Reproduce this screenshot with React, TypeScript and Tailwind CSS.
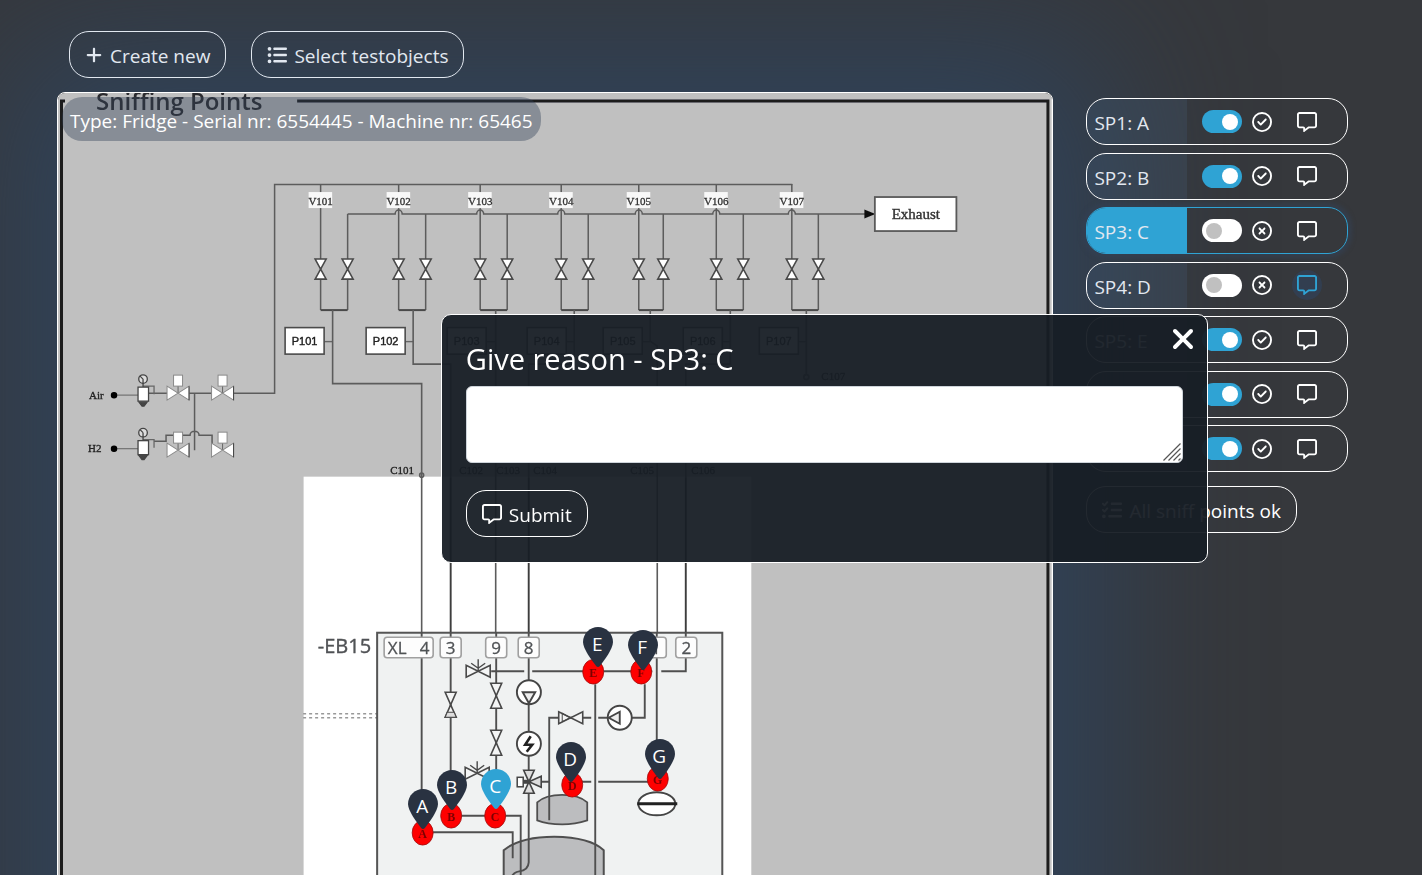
import { useState } from "react";
import {
  FaListCheck,
  FaListUl,
  FaLocationPin,
  FaPlus,
  FaRegCircleCheck,
  FaRegCircleXmark,
  FaRegMessage,
  FaXmark,
} from "react-icons/fa6";

type Point = { id: string; label: string; ok: boolean; hasComment?: boolean };

const initialPoints: Point[] = [
  { id: "SP1", label: "A", ok: true },
  { id: "SP2", label: "B", ok: true },
  { id: "SP3", label: "C", ok: false },
  { id: "SP4", label: "D", ok: false, hasComment: true },
  { id: "SP5", label: "E", ok: true },
  { id: "SP6", label: "F", ok: true },
  { id: "SP7", label: "G", ok: true },
];

// Drawing area shared by the diagram and the pins laid over it.
const VIEW = { x: 58, y: 93, w: 994, h: 907 };

const pins = [
  { label: "E", x: 598, y: 627 },
  { label: "F", x: 643, y: 630 },
  { label: "G", x: 660, y: 739 },
  { label: "D", x: 571, y: 742 },
  { label: "C", x: 496, y: 769 },
  { label: "B", x: 452, y: 770 },
  { label: "A", x: 423, y: 789 },
];

const branches = [
  { n: 1, a: 320.5, b: 347.5, p: 285, drop: 332.5 },
  { n: 2, a: 398.5, b: 425.5, p: 366, drop: 413 },
  { n: 3, a: 480, b: 507, p: 447, drop: 495 },
  { n: 4, a: 561, b: 588, p: 527, drop: 574 },
  { n: 5, a: 638.5, b: 663, p: 603, drop: 650 },
  { n: 6, a: 716, b: 743, p: 683, drop: 730 },
  { n: 7, a: 791.5, b: 818, p: 759, drop: 806 },
];

function ValveV({ x, y, h = 20, fill = "#fff" }: { x: number; y: number; h?: number; fill?: string }) {
  const t = y - h / 2;
  const b = y + h / 2;
  return (
    <path
      d={`M${x - 5.5} ${t}H${x + 5.5}L${x - 5.5} ${b}H${x + 5.5}Z`}
      fill={fill}
      stroke="#484848"
      strokeWidth="1.6"
    />
  );
}

function ValveH({ x, y, w = 24 }: { x: number; y: number; w?: number }) {
  return (
    <path
      d={`M${x - w / 2} ${y - 6}V${y + 6}L${x + w / 2} ${y - 6}V${y + 6}Z`}
      fill="#f4f5f5"
      stroke="#484848"
      strokeWidth="1.6"
    />
  );
}

function Motorised({ x, y, top }: { x: number; y: number; top: number }) {
  return (
    <g stroke="#8a8a8a" strokeWidth="1">
      <path d={`M${x} ${top + 10}V${y}`} stroke="#666" />
      <path d={`M${x - 11} ${y - 7}V${y + 7}L${x + 11} ${y - 7}V${y + 7}Z`} fill="#fff" />
      <path d={`M${x + 11} ${y - 7}V${y + 7}`} stroke="#444" />
      <rect x={x - 4.5} y={top} width="9" height="11" fill="#fff" />
    </g>
  );
}

function Regulator({ y }: { y: number }) {
  return (
    <g stroke="#444" strokeWidth="1.3">
      <path d={`M114 ${y}H138`} stroke="#777" />
      <circle cx="114" cy={y} r="2.6" fill="#000" stroke="#000" />
      <path d={`M143 ${y - 9}H154V${y - 1}`} fill="none" stroke="#666" />
      <circle cx="143" cy={y - 16} r="4.3" fill="#ddd" />
      <path d={`M143 ${y - 16}V${y - 8}M143 ${y - 16}l-3-3`} />
      <rect x="138" y={y - 8} width="10.5" height="14" fill="#fff" />
      <path d={`M139 ${y + 7}h8l-3 4h-2z`} fill="#444" />
    </g>
  );
}

function Terminal({ x, w = 21, text }: { x: number; w?: number; text: string }) {
  return (
    <>
      <rect x={x} y="637" width={w} height="20.5" rx="3" fill="#fdfdfd" stroke="#a0a0a0" strokeWidth="1.6" />
      <text x={x + w / 2} y="654" textAnchor="middle" fontSize="17" fill="#505356" stroke="#505356" strokeWidth="0.3">
        {text}
      </text>
    </>
  );
}

function SniffMark({ x, y, text }: { x: number; y: number; text: string }) {
  return (
    <>
      <ellipse cx={x} cy={y} rx="10.5" ry="12.3" fill="#fe0000" stroke="#a01010" strokeWidth="0.8" />
      <text x={x} y={y + 5} textAnchor="middle" fontSize="12" fontWeight="700" fill="#7c0000" fontFamily="Liberation Serif, serif">
        {text}
      </text>
    </>
  );
}

function Spray({ x, y }: { x: number; y: number }) {
  return <path d={`M${x} ${y}v-12M${x - 7} ${y - 8}l7 5l7-5`} fill="none" stroke="#484848" strokeWidth="1.4" />;
}

function Diagram() {
  return (
    <svg
      viewBox={`${VIEW.x} ${VIEW.y} ${VIEW.w} ${VIEW.h}`}
      className="block w-full font-['Open_Sans','Noto_Sans',sans-serif]"
      role="img"
      aria-label="Sniffing points diagram"
    >
      <defs>
        <filter id="scan" filterUnits="userSpaceOnUse" x="50" y="85" width="1010" height="930">
          <feGaussianBlur stdDeviation="0.6" />
        </filter>
      </defs>
      <rect x="58" y="93" width="994" height="907" fill="#c0c0c0" />
      <g filter="url(#scan)">
        <text x="96" y="110" fontSize="24" fontWeight="600" fill="#2c2c2f">
          Sniffing Points
        </text>
        <path d="M297 101H1047.500V1010M65 101H61.500V1010" fill="none" stroke="#1c1c1e" strokeWidth="3" />
        <path d="M1051 95V1010" stroke="#d8d8d8" />

        <g fill="none" stroke="#5c5c5c" strokeWidth="1.5">
          <path d="M792 184.500H274.500V393H148" />
          <path d="M347.500 214H395a3.500 4 0 0 1 7 0H476.500a3.500 4 0 0 1 7 0H557.500a3.500 4 0 0 1 7 0H635a3.500 4 0 0 1 7 0H712.500a3.500 4 0 0 1 7 0H788a3.500 4 0 0 1 7 0H866" />
          {branches.map((b) => (
            <path key={b.n} d={`M${b.a} 184V310M${b.b} 214V310`} />
          ))}
        </g>
        <path d="M864 209.500L875 214L864 218.500Z" fill="#111" />
        <rect x="874.500" y="197" width="81.500" height="34" fill="#fff" stroke="#5a5a5a" strokeWidth="1.8" />
        <text x="915.500" y="219" textAnchor="middle" fontSize="15" fill="#333" stroke="#333" strokeWidth="0.4" fontFamily="Liberation Serif, serif">
          Exhaust
        </text>

        <rect x="303.500" y="476.500" width="447.500" height="530" fill="#fff" />

        {branches.map((b) => (
          <g key={b.n}>
            <rect x={b.a - 12} y="192" width="23.500" height="16" fill="#f8f8f8" />
            <text x={b.a} y="204.500" textAnchor="middle" fontSize="11" fill="#333" stroke="#333" strokeWidth="0.3" fontFamily="Liberation Serif, serif">
              V10{b.n}
            </text>
            <ValveV x={b.a} y={269} />
            <ValveV x={b.b} y={269} />
            <path d={`M${b.a} 310H${b.b}`} stroke="#4a4a4a" strokeWidth="2" />
            <path d={`M${b.p + 39} 341.500H${b.drop}`} stroke="#666" strokeWidth="1.4" />
            <rect x={b.p} y="327.500" width="39" height="26.500" fill="#fff" stroke="#4c4c4c" strokeWidth="1.6" />
            <text x={b.p + 19.5} y="345" textAnchor="middle" fontSize="11" fill="#222" stroke="#222" strokeWidth="0.4" fontFamily="Liberation Sans, sans-serif">
              P10{b.n}
            </text>
          </g>
        ))}

        <g fill="none" stroke="#5c5c5c" strokeWidth="1.6">
          <path d="M332.500 310V383.500H421.500V832" />
          <path d="M413 310V364H450.500V477" />
          <path d="M495.500 310V815" />
          <path d="M574 310V364H528.500V477" />
          <path d="M650 310V341L657 346V778" />
          <path d="M730 310V364H685.500V477" />
          <path d="M450.500 477V815M528.500 477V815M685.500 477V640" stroke="#3c3c3c" strokeWidth="1.900" />
          <path d="M806 310V374" />
          <circle cx="806" cy="377" r="2.500" />
          <circle cx="421.500" cy="475" r="2" />
        </g>
        <g fontSize="11" fill="#222" stroke="#222" strokeWidth="0.3" fontFamily="Liberation Serif, serif">
          <text x="390" y="474">C101</text>
          <text x="459" y="474">C102</text>
          <text x="496" y="474">C103</text>
          <text x="533" y="474">C104</text>
          <text x="630" y="474">C105</text>
          <text x="691" y="474">C106</text>
          <text x="821" y="380">C107</text>
          <text x="89" y="399">Air</text>
          <text x="88" y="452">H2</text>
        </g>

        <path d="M194.500 393V450M154 441H166V435H190a4.500 4 0 0 1 9 0H212V445" fill="none" stroke="#5c5c5c" strokeWidth="1.5" />
        <Regulator y={395} />
        <Regulator y={448.5} />
        <Motorised x={178} y={393} top={375} />
        <Motorised x={222.5} y={393} top={375} />
        <Motorised x={178} y={450} top={432} />
        <Motorised x={222.5} y={450} top={432} />

        <path d="M303 713.500H377M303 717.500H377" stroke="#999" strokeWidth="1.6" strokeDasharray="3 3" />
        <text x="371" y="653" textAnchor="end" fontSize="20" fill="#505255" stroke="#505255" strokeWidth="0.4">
          -EB15
        </text>

        <rect x="377" y="632.500" width="345" height="380" fill="#f0f2f2" stroke="#545454" strokeWidth="2" />
        <path d="M503.500 1010V850Q520 836.500 554 836.500Q590 837 603.500 850V1010Z" fill="#bcbdbf" stroke="#505050" strokeWidth="2" />
        <path d="M537 820V802Q545 794.500 562 794.500Q579 794.500 587 802V820Q575 824 562 824Q547 824 537 820Z" fill="#bcbdbf" stroke="#505050" strokeWidth="1.8" />

        <g fill="none" stroke="#505050" strokeWidth="1.9">
          <path d="M421.500 632V832H512.500V858" />
          <path d="M450.500 632V815.500H520.500V1010" />
          <path d="M496 632V815" />
          <path d="M528.500 632V862Q528 870 519 871Q512 872 510 880" />
          <path d="M656.500 632V778" />
          <path d="M491 671H524M532 671H652M661 671H685.500V632" />
          <path d="M595 684V1010" />
          <path d="M644.500 684V717.500H598M591 717.500H549V820" />
          <path d="M535 781.500H549M572 781.500H591M598 781.500H657" />
        </g>

        <Terminal x={384} w={49} text={"XL\u00a0\u00a0 4"} />
        <Terminal x={440} text="3" />
        <Terminal x={485.5} text="9" />
        <Terminal x={518} text="8" />
        <Terminal x={645} text="1" />
        <Terminal x={675.5} text="2" />

        <ValveH x={478} y={671} />
        <Spray x={478} y={671} />
        <ValveH x={477} y={773} />
        <Spray x={477} y={773} />
        <ValveV x={450.5} y={704.5} h={25} fill="#f4f5f5" />
        <path d="M445 717h11l-2-5h-7z" fill="#ddd" stroke="#484848" />
        <ValveV x={496} y={695.5} h={25} fill="#f4f5f5" />
        <ValveV x={496} y={742.5} h={25} fill="#f4f5f5" />
        <ValveH x={570.5} y={717.5} />
        <path d="M562 713l8 4.500l-8 4z" fill="none" stroke="#484848" />

        <g fill="#fff" stroke="#444" strokeWidth="1.9">
          <circle cx="528.700" cy="692" r="12" />
          <path d="M522.500 692H535L528.700 703Z" fill="#eee" />
          <circle cx="528.700" cy="743.500" r="12" />
          <path d="M530.500 736L525 744.500H532L526.500 751.500" fill="none" stroke="#222" strokeWidth="2.600" />
          <circle cx="619.500" cy="717.500" r="12" />
          <path d="M619.500 711.500V723.500L608.500 717.500Z" fill="#eee" />
          <path d="M523.500 770H534L528.700 781.500L534 793H523.500L528.700 781.500Z" fill="#ddd" strokeWidth="1.600" />
          <path d="M541 776V787L528.700 781.500Z" fill="#ddd" strokeWidth="1.600" />
          <rect x="517" y="777" width="6" height="9.500" strokeWidth="1.500" />
          <path d="M523 781.500H530" strokeWidth="4" />
          <ellipse cx="656.500" cy="803.500" rx="18.500" ry="11.500" />
          <path d="M637 803.500H677" strokeWidth="3" stroke="#222" />
        </g>

        <SniffMark x={593} y={671.5} text="E" />
        <SniffMark x={641} y={671.5} text="F" />
        <SniffMark x={657.5} y={778.5} text="G" />
        <SniffMark x={572} y={784.5} text="D" />
        <SniffMark x={495} y={815.5} text="C" />
        <SniffMark x={451} y={815.5} text="B" />
        <SniffMark x={422.5} y={832.5} text="A" />
      </g>
    </svg>
  );
}

const pill = "flex h-[47px] items-center gap-[7px] rounded-[20px] border px-[15px]";
const headerPill = `${pill} border-slate-200 text-slate-200`;
const plainPill = `${pill} border-white`;

export default function App() {
  const [points, setPoints] = useState(initialPoints);
  const [selected, setSelected] = useState("C");
  const [open, setOpen] = useState(true);
  const current = points.find((p) => p.label === selected)!;

  const toggle = (id: string) =>
    setPoints((list) => list.map((p) => (p.id === id ? { ...p, ok: !p.ok } : p)));

  return (
    <div className="h-screen overflow-hidden bg-[#36383c] pl-[57px] pt-[31px] font-['Open_Sans','Noto_Sans',sans-serif] text-[19px] text-white">
      <header className="relative z-10 flex gap-[25px] pl-3">
        <button type="button" className={headerPill}>
          <FaPlus size={18} />
          <span className="pt-[3px]">Create new</span>
        </button>
        <button type="button" className={headerPill}>
          <FaListUl size={20} />
          <span className="pt-[3px]">Select testobjects</span>
        </button>
      </header>

      <main className="mt-[14px] flex items-start gap-[33px]">
        <section className="relative w-[73%] shrink-0 rounded-lg border border-white shadow-[0_0_150px_50px_#30435a]">
          <div className="overflow-hidden rounded-[7px]">
            <Diagram />
          </div>
          <p className="absolute left-1 top-1 flex h-11 items-center rounded-[20px] bg-slate-700/40 px-2 pt-1">
            Type: Fridge - Serial nr: 6554445 - Machine nr: 65465
          </p>
          {pins.map((pin) => (
            <button
              key={pin.label}
              type="button"
              aria-label={`Sniffing point ${pin.label}`}
              onClick={() => setSelected(pin.label)}
              style={{
                left: `${((pin.x - VIEW.x) / VIEW.w) * 100}%`,
                top: `${((pin.y - VIEW.y) / VIEW.h) * 100}%`,
              }}
              className="absolute flex h-10 w-[30px] -translate-x-1/2 justify-center"
            >
              <FaLocationPin
                size={40}
                className={pin.label === selected ? "absolute top-0 text-[#2fa3d4]" : "absolute top-0 text-[#293241]"}
              />
              <span className="relative pr-0.5 pt-[3px]">{pin.label}</span>
            </button>
          ))}
        </section>

        <aside className="relative mt-[6px] w-[262px] shrink-0">
          <ul className="flex h-[374px] flex-col justify-between">
            {points.map((p) => {
              const active = p.label === selected;
              return (
                <li
                  key={p.id}
                  className={
                    active
                      ? "flex h-[47px] items-center overflow-hidden rounded-[20px] border border-[#2fa3d4] shadow-[0_0_4px_4px_#33415599]"
                      : "flex h-[47px] items-center overflow-hidden rounded-[20px] border border-white"
                  }
                >
                  <label
                    htmlFor={p.id}
                    className={
                      active
                        ? "flex h-full w-[100px] items-center bg-[#2fa3d4] pl-[7px] pt-1 text-slate-200"
                        : "flex h-full w-[100px] items-center bg-[#5078a0]/15 pl-[7px] pt-1 text-slate-200"
                    }
                  >
                    {p.id}: {p.label}
                  </label>
                  <input
                    id={p.id}
                    type="checkbox"
                    checked={p.ok}
                    onChange={() => toggle(p.id)}
                    className="ml-[15px] flex h-[23px] w-10 appearance-none items-center rounded-full bg-white px-1 before:size-4 before:rounded-full before:bg-[#c0c0c0] checked:bg-[#2fa3d4] checked:before:ml-4 checked:before:bg-white"
                  />
                  {p.ok ? (
                    <FaRegCircleCheck size={20} className="ml-[10px]" />
                  ) : (
                    <FaRegCircleXmark size={20} className="ml-[10px]" />
                  )}
                  <button
                    type="button"
                    aria-label={`Comment on ${p.id}`}
                    onClick={() => {
                      setSelected(p.label);
                      setOpen(true);
                    }}
                    className={
                      p.hasComment
                        ? "ml-5 flex size-[30px] items-center justify-center rounded-full bg-slate-700/70 text-[#2fa3d4]"
                        : "ml-5 flex size-[30px] items-center justify-center rounded-full"
                    }
                  >
                    <FaRegMessage size={20} />
                  </button>
                </li>
              );
            })}
          </ul>
          <button type="button" className={`${plainPill} mt-[14px]`}>
            <FaListCheck size={20} />
            <span className="pt-[3px]">All sniff points ok</span>
          </button>
        </aside>
      </main>

      {open && (
        <div className="pointer-events-none fixed inset-0 z-20 flex items-center pl-[31%] pt-[2px]">
          <form
            role="dialog"
            aria-labelledby="reason-title"
            onSubmit={(e) => e.preventDefault()}
            className="pointer-events-auto relative w-[78.2%] rounded-[10px] border border-white bg-[#171e25]/95 px-6 pb-[25px] pt-6"
          >
            <label id="reason-title" htmlFor="reason" className="block text-[29px] leading-10">
              Give reason - {current.id}: {current.label}
            </label>
            <button
              type="button"
              aria-label="Close"
              onClick={() => setOpen(false)}
              className="absolute right-2 top-2 flex size-8 items-center justify-center"
            >
              <FaXmark size={32} />
            </button>
            <div className="relative mt-[7px]">
              <textarea
                id="reason"
                className="block h-[77px] w-full resize-none rounded-md border border-[#ced4da] bg-white px-3 py-2 text-slate-900 outline-none"
              />
              <svg
                viewBox="0 0 18 18"
                className="pointer-events-none absolute bottom-[2px] right-[2px] size-[18px]"
                stroke="#555"
                strokeWidth="1.2"
                aria-hidden="true"
              >
                <path d="M0.500 17.500L17.500 0.500M5.500 17.500L17.500 5.500M10.500 17.500L17.500 10.500M15.500 17.500L17.500 15.500" />
              </svg>
            </div>
            <button type="submit" className={`${plainPill} mt-[27px]`}>
              <FaRegMessage size={20} />
              <span className="pt-[3px]">Submit</span>
            </button>
          </form>
        </div>
      )}
    </div>
  );
}
